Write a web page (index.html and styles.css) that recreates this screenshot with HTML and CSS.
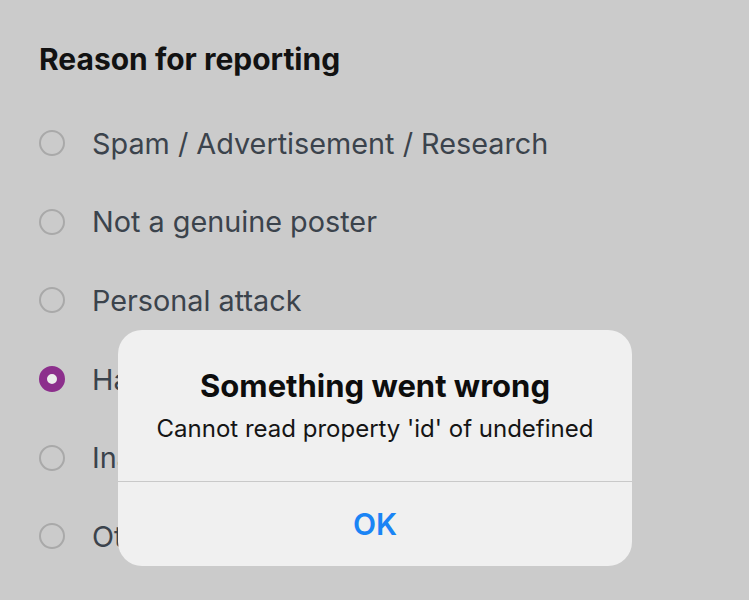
FILE: index.html
```html
<!DOCTYPE html>
<html lang="en">

<head>
    <meta charset="utf-8">
    <meta name="viewport" content="width=device-width, initial-scale=1.0">
    <title>Report</title>
    <link rel="stylesheet" href="styles.css">
</head>

<body>
    <section class="report">
        <h1>Reason for reporting</h1>
        <ul class="reasons">
            <li class="reason"><span class="radio"></span>Spam / Advertisement / Research</li>
            <li class="reason"><span class="radio"></span>Not a genuine poster</li>
            <li class="reason"><span class="radio"></span>Personal attack</li>
            <li class="reason"><span class="radio valgt"></span>Hate speech</li>
            <li class="reason"><span class="radio"></span>Inappropriate content</li>
            <li class="reason"><span class="radio"></span>Other</li>
        </ul>
    </section>

    <div class="alert">
        <div class="alert_body">
            <h2>Something went wrong</h2>
            <p>Cannot read property 'id' of undefined</p>
        </div>
        <div class="alert_btn">OK</div>
    </div>
</body>

</html>
```

FILE: styles.css
```css
body {
    margin: 0;
    background-color: #cbcbcb;
    font-family: Inter, "Noto Sans", sans-serif;
    width: 749px;
    height: 600px;
    overflow: hidden;
    position: relative;
}

.report {
    padding: 40px 0 0 39px;
}

h1 {
    font-size: 30px;
    font-weight: 700;
    color: #121212;
    margin: 0 0 26px 0;
    line-height: 38px;
}

.reasons {
    list-style: none;
    margin: 0;
    padding: 0;
}

.reason {
    display: flex;
    align-items: center;
    height: 78.6px;
    font-size: 28.8px;
    color: #3b434c;
}

.radio {
    width: 22px;
    height: 22px;
    border: 2px solid #a9a9a9;
    border-radius: 50%;
    margin-right: 27px;
    flex-shrink: 0;
}

.radio.valgt {
    width: 10px;
    height: 10px;
    border: 8px solid #8c2f8c;
    background-color: #ececec;
}

/* alert box on top of the list */
.alert {
    position: absolute;
    left: 118px;
    top: 330px;
    width: 514px;
    height: 236px;
    background-color: #f0f0f0;
    border-radius: 24px;
    display: flex;
    flex-direction: column;
    text-align: center;
}

.alert_body {
    height: 152px;
    border-bottom: 1px solid #c9c9c9;
    padding-top: 37px;
    box-sizing: border-box;
}

.alert h2 {
    font-size: 31px;
    font-weight: 700;
    color: #0d0d0d;
    margin: 0 0 9px 0;
    line-height: 38px;
}

.alert p {
    font-size: 24px;
    color: #151515;
    margin: 0;
    line-height: 30px;
}

.alert_btn {
    flex: 1;
    display: flex;
    align-items: center;
    justify-content: center;
    font-size: 30px;
    font-weight: 600;
    color: #1a84f5;
}
```
